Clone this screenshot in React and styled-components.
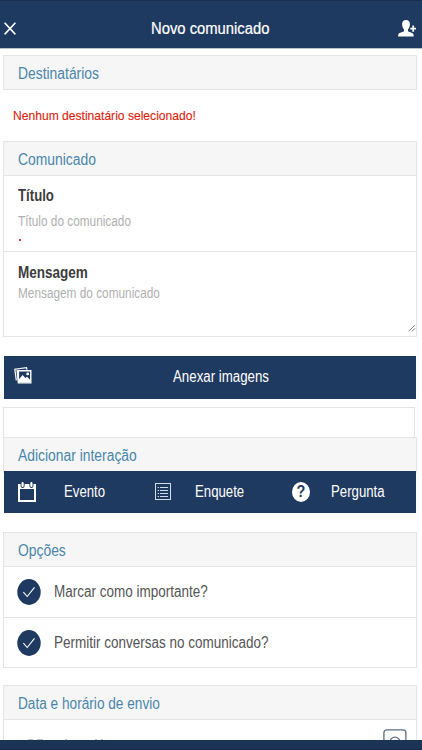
import React from 'react';
import styled, { createGlobalStyle } from 'styled-components';

const sections = {
    interactions: [
        { icon: 'calendar', label: 'Evento', pad: 0, gap: 46 },
        { icon: 'list', label: 'Enquete', pad: 5, gap: 40 },
        { icon: 'help', label: 'Pergunta', pad: 7, gap: 39 },
    ],
    options: ['Marcar como importante?', 'Permitir conversas no comunicado?'],
};

export default function App() {
    return(
        <Page>
            <GlobalStyle/>
            <Navbar>
                <CloseIcon/>
                <NavTitle><Text $size={16} $stretch={.925}>Novo comunicado</Text></NavTitle>
                <AddUserIcon/>
            </Navbar>
            <Content>
                <Card>
                    <CardHeader $alone><Text $size={16} $stretch={.867}>Destinatários</Text></CardHeader>
                </Card>
                <Warning><Text $size={13} $stretch={.93}>Nenhum destinatário selecionado!</Text></Warning>
                <Card>
                    <CardHeader><Text $size={16} $stretch={.867}>Comunicado</Text></CardHeader>
                    <TitleField>
                        <FieldLabel><Text $size={16} $stretch={.825}>Título</Text></FieldLabel>
                        <Placeholder><Text $size={14} $stretch={.844}>Título do comunicado</Text></Placeholder>
                        <Required/>
                    </TitleField>
                    <MessageField>
                        <FieldLabel><Text $size={16} $stretch={.845}>Mensagem</Text></FieldLabel>
                        <Placeholder $tight><Text $size={14} $stretch={.844}>Mensagem do comunicado</Text></Placeholder>
                        <Grip viewBox="0 0 8 8"><path d="M.7 7.3L6.8 1.2M4 7.3L7 4.3"/></Grip>
                    </MessageField>
                </Card>
                <AttachButton>
                    <ImagesIcon/>
                    <AttachLabel><Text $size={16} $stretch={.83}>Anexar imagens</Text></AttachLabel>
                </AttachButton>
                <EmptyBox/>
                <Card>
                    <CardHeader><Text $size={16} $stretch={.867}>Adicionar interação</Text></CardHeader>
                </Card>
                <Interactions>
                    {sections.interactions.map(({icon, label, pad, gap}) => (
                        <Interaction key={label} $pad={pad}>
                            <IconSlot $width={gap}><InteractionIcon name={icon}/></IconSlot>
                            <Text $size={16} $stretch={.825}>{label}</Text>
                        </Interaction>
                    ))}
                </Interactions>
                <OptionsCard>
                    <CardHeader><Text $size={16} $stretch={.867}>Opções</Text></CardHeader>
                    {sections.options.map(option => (
                        <Option key={option}>
                            <Check viewBox="0 0 24 26">
                                <ellipse cx="12" cy="13" rx="11.7" ry="12.9" fill="#1f3a60"/>
                                <path d="M6.4 13.2L10.2 17.5L17.5 8.3" fill="none" stroke="#fff" strokeWidth="1.1"/>
                            </Check>
                            <Text $size={16} $stretch={.843}>{option}</Text>
                        </Option>
                    ))}
                </OptionsCard>
                <Card>
                    <CardHeader><Text $size={16} $stretch={.853}>Data e horário de envio</Text></CardHeader>
                    <DateField>
                        <DateHint viewBox="0 0 80 2"><path d="M0 1.5H5M9 1.5H15M37 1.5H39M67 1.5H69M73 1.5H75"/></DateHint>
                        <ClockButton viewBox="0 0 24 24">
                            <rect x=".9" y=".9" width="22" height="22" rx="3"/>
                            <circle cx="12" cy="13.2" r="5"/>
                        </ClockButton>
                    </DateField>
                </Card>
            </Content>
            <BottomBar/>
        </Page>
    )
}

function CloseIcon() {
    return(
        <Icon $w={12} $h={14} viewBox="0 0 12 14">
            <path d="M.6 .8L11.4 12.4M11.4 .8L.6 12.4" stroke="#fff" strokeWidth="1.6"/>
        </Icon>
    )
}

function AddUserIcon() {
    return(
        <Icon $w={18} $h={17} viewBox="0 0 18 17">
            <path fill="#fff" d="M8 0C5.2 0 4 1.8 4.1 4.3C4.2 6.8 5 8.4 6 9.4V11C5.5 12.2 1.2 12.4 .5 14.1C.2 14.8 .1 15.6 .1 16.6H15.7C15.7 15.6 15.6 14.8 15.3 14.1C14.6 12.4 10.5 12.2 10 11V9.4C11 8.4 11.8 6.8 11.9 4.3C12 1.8 10.8 0 8 0Z"/>
            <path d="M12.3 8.6H18M15.2 5.4V11.8" stroke="#fff" strokeWidth="1.8"/>
        </Icon>
    )
}

function ImagesIcon() {
    return(
        <Icon $w={18} $h={17} viewBox="0 0 18 17">
            <path d="M2.3 13.3L.8 2.2L12.5 .7L13 2.6" fill="none" stroke="#fff" strokeWidth="1.2"/>
            <path d="M4.3 15.2L3.2 3.7H16.8V15.9H4.4V4" fill="none" stroke="#fff" strokeWidth="1.4"/>
            <path d="M5 15V12.2L8.6 8L11.3 11L13 9.8L16.3 13V15.4H5Z" fill="#fff"/>
            <circle cx="13.7" cy="6.9" r="1.4" fill="#fff"/>
        </Icon>
    )
}

function InteractionIcon({name}) {
    if(name === 'calendar') {
        return(
            <Icon $w={18} $h={20} viewBox="0 0 18 20">
                <path fill="#fff" fillRule="evenodd" d="M0 2H18V20H0ZM2 7V18H16V7Z"/>
                <path d="M4.6 .8V4M13.4 .8V4" stroke="#1f3a60" strokeWidth="4" strokeLinecap="round"/>
                <path d="M4.6 1.2V4M13.4 1.2V4" stroke="#fff" strokeWidth="2.2" strokeLinecap="round"/>
            </Icon>
        )
    }
    if(name === 'list') {
        return(
            <Icon $w={16} $h={17} viewBox="0 0 16 17">
                <rect x=".5" y=".5" width="15" height="16" fill="none" stroke="#d3dbe5"/>
                <path d="M5 4.5H13M5 7.5H13M5 10.5H13M5 13.5H13" stroke="#d3dbe5"/>
                <path d="M2.7 4.5H4M2.7 7.5H4M2.7 10.5H4M2.7 13.5H4" stroke="#d3dbe5"/>
            </Icon>
        )
    }
    return <HelpDot><Text $size={16} $stretch={.9} $origin="center">?</Text></HelpDot>
}

const GlobalStyle = createGlobalStyle`
    *{
        box-sizing: border-box;
    }
    body{
        margin: 0;
        background: #ffffff;
        font-family: "Liberation Sans", Arial, sans-serif;
    }
`;

const Page = styled.div`
    width: 422px;
    height: 750px;
    display: flex;
    flex-direction: column;
    overflow: hidden;
    color: #555555;
`;

const Text = styled.span`
    display: inline-block;
    font-size: ${props => props.$size}px;
    line-height: 20px;
    white-space: nowrap;
    transform: scaleX(${props => props.$stretch});
    transform-origin: ${props => props.$origin || "left"} center;
`;

const Icon = styled.svg`
    display: block;
    flex: none;
    width: ${props => props.$w}px;
    height: ${props => props.$h}px;
`;

const Navbar = styled.header`
    flex: none;
    height: 49px;
    padding: 8px 6px 0 4px;
    display: flex;
    align-items: center;
    background: #1f3a60;
    border-top: 1px solid #1a3152;
    border-bottom: 1px solid #b9c2cf;
    color: #ffffff;
`;

const NavTitle = styled.div`
    flex: 1;
    padding-left: 135px;
    -webkit-text-stroke: .2px #ffffff;
`;

const Content = styled.main`
    flex: 1;
    min-height: 0;
    overflow: hidden;
    padding: 6px 5px 0 3px;
`;

const Card = styled.section`
    border: 1px solid #e4e4e4;
`;

const CardHeader = styled.div`
    height: ${props => props.$alone ? 33 : 34}px;
    padding: 2px 0 0 14px;
    display: flex;
    align-items: center;
    background: #f6f6f6;
    border-bottom: ${props => props.$alone ? "none" : "1px solid #e4e4e4"};
    color: #4a86ab;
`;

const Warning = styled.div`
    height: 51px;
    padding: 1px 0 0 10px;
    display: flex;
    align-items: center;
    color: #e01f0f;
    -webkit-text-stroke: .15px #e01f0f;
`;

const TitleField = styled.div`
    height: 76px;
    padding: 10px 0 0 14px;
    border-bottom: 1px solid #e4e4e4;
`;

const MessageField = styled.div`
    position: relative;
    height: 84px;
    padding: 11px 0 0 14px;
`;

const FieldLabel = styled.div`
    height: 20px;
    color: #3c3c3c;
    font-weight: bold;
`;

const Placeholder = styled.div`
    height: 20px;
    margin-top: ${props => props.$tight ? 0 : 5}px;
    color: #b0b0b0;
`;

const Required = styled.div`
    width: 2px;
    height: 2px;
    margin: 8px 0 0 1px;
    background: #e0373d;
`;

const Grip = styled.svg`
    position: absolute;
    right: 0;
    bottom: 4px;
    width: 8px;
    height: 8px;
    fill: none;
    stroke: #777777;
    stroke-width: .9;
`;

const AttachButton = styled.div`
    height: 43px;
    margin: 19px 1px 0;
    padding: 0 0 5px 10px;
    display: flex;
    align-items: center;
    background: #1f3a60;
    color: #ffffff;
`;

const AttachLabel = styled.div`
    padding: 4px 0 0 141px;
`;

const EmptyBox = styled.div`
    height: 30px;
    margin: 8px 2px 0 0;
    border: 1px solid #e4e4e4;
    border-bottom: none;
`;

const Interactions = styled.div`
    height: 42px;
    margin: -2px 1px 0;
    padding: 0 0 1px 14px;
    display: grid;
    grid-template-columns: 132px 135px 1fr;
    background: #1f3a60;
    color: #ffffff;
`;

const Interaction = styled.div`
    padding-left: ${props => props.$pad}px;
    display: flex;
    align-items: center;
`;

const IconSlot = styled.div`
    width: ${props => props.$width}px;
`;

const HelpDot = styled.div`
    width: 18px;
    height: 20px;
    display: flex;
    align-items: center;
    justify-content: center;
    border-radius: 50%;
    background: #ffffff;
    color: #1f3a60;
    font-weight: bold;
`;

const OptionsCard = styled(Card)`
    margin: 19px 0 17px;
`;

const Option = styled.div`
    height: 50px;
    padding-left: 13px;
    display: flex;
    align-items: center;
    gap: 13px;
    & + &{
        border-top: 1px solid #e4e4e4;
    }
`;

const Check = styled.svg`
    flex: none;
    width: 24px;
    height: 26px;
`;

const DateField = styled.div`
    height: 50px;
    padding: 9px 9px 0 24px;
    display: flex;
    justify-content: space-between;
`;

const DateHint = styled.svg`
    width: 80px;
    height: 2px;
    margin-top: 9px;
    stroke: #bfc3ca;
    stroke-width: 1;
`;

const ClockButton = styled.svg`
    width: 24px;
    height: 24px;
    fill: none;
    stroke: #5b6d8a;
    stroke-width: 1.3;
`;

const BottomBar = styled.footer`
    flex: none;
    height: 10px;
    background: #1c3557;
    border-bottom: 1px solid #16294a;
`;
